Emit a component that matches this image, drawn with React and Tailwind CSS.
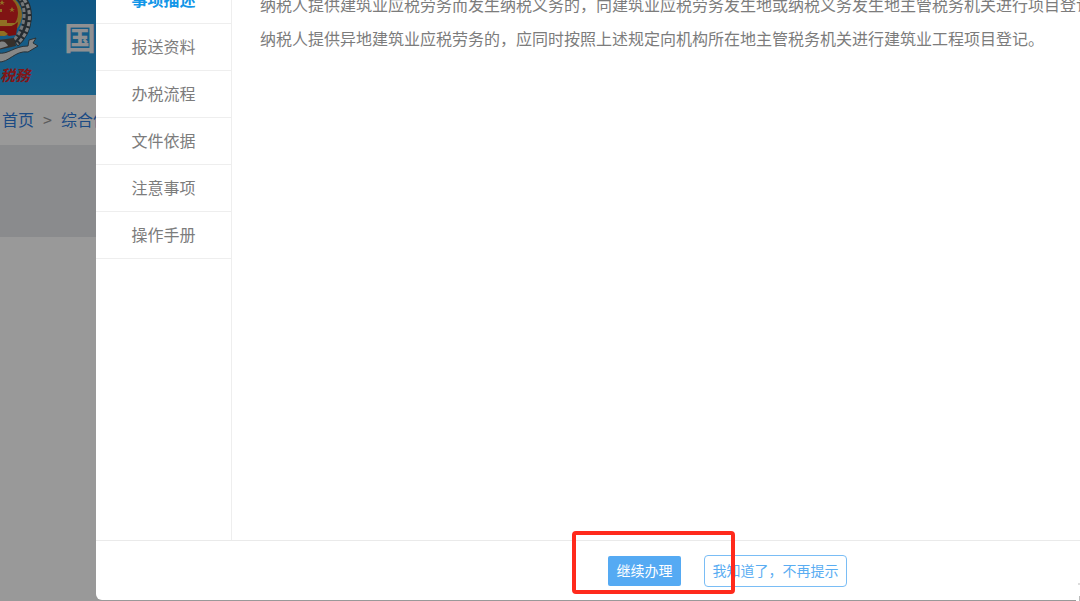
const TABS = ["事项描述", "报送资料", "办税流程", "文件依据", "注意事项", "操作手册"];

function Emblem() {
  return (
    <svg className="h-full w-10 shrink-0" viewBox="0 0 40 95" role="img" aria-label="税务徽标">
      <path d="M20 -3C31 8 30 30 15 43" fill="none" stroke="#3f4a52" strokeWidth="9" />
      <path d="M19 -3C27 8 26 28 13 41" fill="none" stroke="#c3c7ca" strokeWidth="3" strokeDasharray="4 2" />
      <path d="M22 -3C33 8 32 31 17 44" fill="none" stroke="#d3d6d8" strokeWidth="3" strokeDasharray="4 2" strokeDashoffset="3" />
      <path d="M-2 40L14 38L16 46L-2 50Z" fill="#5a5048" />
      <path d="M-2 43C3 40 6 42 8 46L-2 49Z" fill="#d8dadb" />
      <path d="M-2 53C8 55 14 46 28 46L29 40L36 38L33 43L38 46L28 52C15 50 9 63 -2 62Z" fill="#dfe1e2" stroke="#46535c" strokeWidth="1" />
      <circle cx="1" cy="15" r="21" fill="#e0aa38" />
      <circle cx="0" cy="13" r="18" fill="#d62222" />
      <path d="M2 0l1 2h2l-2 1 1 2-2-1-2 1 1-2-2-1h2zM12 7l1 2h2l-2 1 1 2-2-1-2 1 1-2-2-1h2zM-1 9h3v3h-3z" fill="#f0b93c" />
      <path d="M-2 20H7V23H15V26H-2Z" fill="#f0bb3c" />
      <path d="M-2 27C6 28 12 27 18 22L16 35L9 36L4 33L-2 35Z" fill="#c91c1c" />
      <path d="M-2 31H4L8 34L4 36L-2 34Z" fill="#f0bb3c" />
      <text x="0" y="81" fontSize="15" fontStyle="italic" fontWeight="600" fill="#d92424" fontFamily="'Noto Sans CJK SC', sans-serif">税務</text>
    </svg>
  );
}

export default function App() {
  return (
    <div className="relative h-screen overflow-hidden bg-white font-['Noto_Sans_CJK_SC','Noto_Sans',sans-serif] text-base">
      <div>
        <header className="flex h-[95px] items-center bg-linear-to-b from-[#1c91dc] to-[#30a4e5]">
          <Emblem />
          <h1 className="ml-6 pb-6 text-[32px] leading-8 font-bold whitespace-nowrap text-[#eef1f3]">国</h1>
        </header>
        <nav aria-label="面包屑" className="flex h-[50px] items-center gap-[9px] px-0.5 pb-0.5 text-[#2f7ddd]">
          <a href="#home">首页</a>
          <span className="text-[#999]">&gt;</span>
          <a href="#service">综合信息</a>
        </nav>
        <div className="h-[92px] bg-[#e6e8eb]" />
      </div>

      <div className="absolute inset-0 bg-black/40" />

      <section
        role="dialog"
        aria-modal="true"
        aria-label="事项描述"
        className="absolute top-0 right-0 bottom-px left-24 flex flex-col rounded-bl-md bg-white text-[#7c7c7c]"
      >
        <div className="flex min-h-0 flex-1 overflow-hidden">
          <div role="tablist" className="w-34 shrink-0 border-r border-[#eee]">
            <div className="-mt-6 flex flex-col">
              {TABS.map((tab, i) => (
                <button
                  key={tab}
                  role="tab"
                  aria-selected={i === 0}
                  className={
                    i === 0
                      ? "h-12 border-b border-[#eee] pb-0.5 font-bold text-[#1296e8]"
                      : "h-[47px] border-b border-[#eee] pb-0.5"
                  }
                >
                  {tab}
                </button>
              ))}
            </div>
          </div>
          <div role="tabpanel" className="min-w-0 flex-1 overflow-hidden pl-7">
            <div className="-mt-[13px] leading-[34px] whitespace-nowrap">
              <p>纳税人提供建筑业应税劳务而发生纳税义务的，向建筑业应税劳务发生地或纳税义务发生地主管税务机关进行项目登记</p>
              <p>纳税人提供异地建筑业应税劳务的，应同时按照上述规定向机构所在地主管税务机关进行建筑业工程项目登记。</p>
            </div>
          </div>
        </div>
        <footer className="flex h-15 shrink-0 items-center border-t border-[#eaeaea] pl-[512px] text-sm">
          <div className="relative">
            <button className="h-[30px] w-[73px] rounded-xs bg-[#55aaf3] pb-0.5 text-white">继续办理</button>
            <div className="pointer-events-none absolute -top-[25px] -left-9 h-[63px] w-[163px] rounded-sm border-4 border-[#ff2a1c]" />
          </div>
          <button className="ml-[23px] h-8 w-[143px] rounded-sm border border-[#7abdf5] pb-0.5 text-[#5aadf2]">
            我知道了，不再提示
          </button>
        </footer>
        <svg className="absolute right-0 -bottom-px h-5 w-1" viewBox="0 0 4 20" aria-hidden="true">
          <path d="M0 19H3V20H0Z" fill="#fff" />
          <path d="M2 2H4V4H2Z" fill="#ddd" />
          <path d="M3 15H4V20H3Z" fill="#bbb" />
        </svg>
      </section>
    </div>
  );
}
